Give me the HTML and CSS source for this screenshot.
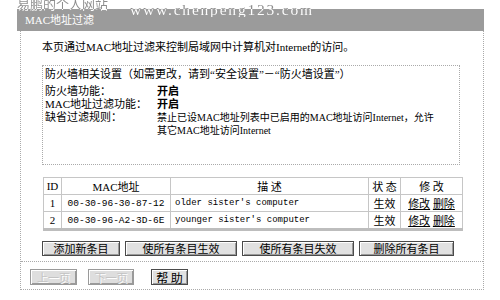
FILE: index.html
```html
<!DOCTYPE html>
<html>
<head>
  <meta charset="utf-8">
  <title>MAC地址过滤</title>
  <link rel="stylesheet" href="styles.css">
</head>
<body>
  <div class="watermark"><span class="wm-cn">易鹏的个人网站</span><span class="wm-url">www.chenpeng123.com</span></div>
  <div class="page">
    <div class="title">MAC地址过滤</div>
    <div class="panel">
      <div class="content">
        <p class="intro">本页通过MAC地址过滤来控制局域网中计算机对Internet的访问。</p>

        <div class="fw-box">
          <div class="fw-head">防火墙相关设置（如需更改，请到“安全设置”－“防火墙设置”）</div>
          <div class="fw-row"><span class="label">防火墙功能：</span><b>开启</b></div>
          <div class="fw-row"><span class="label">MAC地址过滤功能：</span><b>开启</b></div>
          <div class="fw-row">
            <span class="label">缺省过滤规则：</span>
            <span class="value">禁止已设MAC地址列表中已启用的MAC地址访问Internet，允许<br>其它MAC地址访问Internet</span>
          </div>
        </div>

        <table class="mac-list">
          <tr>
            <th class="c-id">ID</th>
            <th class="c-mac">MAC地址</th>
            <th class="c-desc">描 述</th>
            <th class="c-state">状 态</th>
            <th class="c-edit">修 改</th>
          </tr>
          <tr>
            <td class="c-id">1</td>
            <td class="c-mac mono">00-30-96-30-87-12</td>
            <td class="c-desc mono">older sister's computer</td>
            <td class="c-state">生效</td>
            <td class="c-edit"><a href="#">修改</a> <a href="#">删除</a></td>
          </tr>
          <tr>
            <td class="c-id">2</td>
            <td class="c-mac mono">00-30-96-A2-3D-6E</td>
            <td class="c-desc mono">younger sister's computer</td>
            <td class="c-state">生效</td>
            <td class="c-edit"><a href="#">修改</a> <a href="#">删除</a></td>
          </tr>
        </table>

        <div class="actions">
          <button class="btn w-add">添加新条目</button>
          <button class="btn w-all">使所有条目生效</button>
          <button class="btn w-all">使所有条目失效</button>
          <button class="btn w-del">删除所有条目</button>
        </div>
      </div>

      <div class="nav">
        <button class="btn w-prev" disabled>上一页</button>
        <button class="btn w-next" disabled>下一页</button>
        <button class="btn w-help">帮 助</button>
      </div>
    </div>
  </div>
</body>
</html>
```

FILE: styles.css
```css
* {
  box-sizing: border-box;
}

body {
  margin: 0;
  background: #fff;
  color: #000;
  font-family: "Liberation Serif", "Noto Sans CJK SC", serif;
  font-size: 11px;
}

/* site stamp across the top of the screenshot, grey on white, white on the bar */
.watermark {
  position: absolute;
  top: -3px;
  left: 17px;
  display: flex;
  align-items: flex-start;
  white-space: nowrap;
  color: transparent;
  background: linear-gradient(to bottom, #8c8c8c 0, #8c8c8c 12px, #fff 12px);
  -webkit-background-clip: text;
  background-clip: text;
}

.wm-cn {
  font-family: "Noto Sans CJK SC", sans-serif;
  font-size: 13px;
  line-height: 14px;
}

.wm-url {
  margin: 5px 0 0 22px;
  font-size: 15.5px;
  line-height: 15px;
  letter-spacing: 1.8px;
}

.page {
  padding: 9px 0 0 17px;
}

.title {
  width: 467px;
  height: 22px;
  line-height: 22px;
  padding-left: 8px;
  background: #9b9b9b;
  color: #fff;
}

.panel {
  width: 464px;
  height: 259px;
  margin-left: 3px;
  border: 1px dotted #aaa;
  border-top: none;
  display: flex;
  flex-direction: column;
}

.content {
  padding: 10px 0 0 21px;
  flex: 1;
}

.intro {
  margin: 0 0 11px;
  line-height: 13px;
}

.fw-box {
  width: 418px;
  height: 100px;
  border: 1px dotted #aaa;
  padding: 2px 0 0 2px;
  line-height: 13px;
}

.fw-head {
  margin-bottom: 4px;
}

.fw-row {
  display: flex;
}

.fw-row .label {
  width: 112px;
  flex: none;
}

.fw-row .value {
  font-size: 10px;
  white-space: nowrap;
}

.mac-list {
  width: 419px;
  margin: 12px 0 0 1px;
  border-collapse: collapse;
  border: 1px solid #b4b4b4;
  border-bottom: 3px solid #bdbdbd;
  table-layout: fixed;
}

.mac-list th,
.mac-list td {
  height: 17px;
  padding: 0;
  border: 1px solid #c6c6c6;
  font-weight: normal;
  text-align: center;
  white-space: nowrap;
}

.mac-list .c-id { width: 18px; }
.mac-list .c-mac { width: 109px; }
.mac-list .c-desc { width: 198px; }
.mac-list .c-state { width: 32px; }
.mac-list .c-edit { width: 62px; }

.mac-list td.c-desc {
  text-align: left;
  padding-left: 4px;
}

.mono {
  font-family: "Liberation Mono", monospace;
  font-size: 9px;
}

.mac-list td.c-mac {
  font-size: 9.5px;
}

.mac-list a {
  color: #000;
  text-decoration: underline;
}

.actions {
  display: flex;
  gap: 5px;
  margin-top: 10px;
}

.btn {
  height: 15px;
  padding: 0;
  border: 1px solid #4a4a4a;
  background: #e1e1e1;
  box-shadow: inset 1px 1px #fff, inset -1px -1px #9a9a9a;
  font-family: "Noto Sans CJK SC", sans-serif;
  font-size: 11px;
  line-height: 13px;
  color: #000;
}

.w-add { width: 78px; }
.w-all { width: 112px; }
.w-del { width: 95px; }

.nav {
  border-top: 1px dotted #aaa;
  padding: 7px 0 4px 9px;
  display: flex;
}

.nav .btn {
  height: 16px;
}

.btn:disabled {
  color: #c4c4c4;
  border-color: #9a9a9a;
  background: #dedede;
  text-shadow: 1px 1px #fff;
}

.w-prev { width: 47px; }
.w-next { width: 46px; margin-left: 11px; }
.w-help { width: 37px; margin-left: 17px; font-size: 12px; }
```
